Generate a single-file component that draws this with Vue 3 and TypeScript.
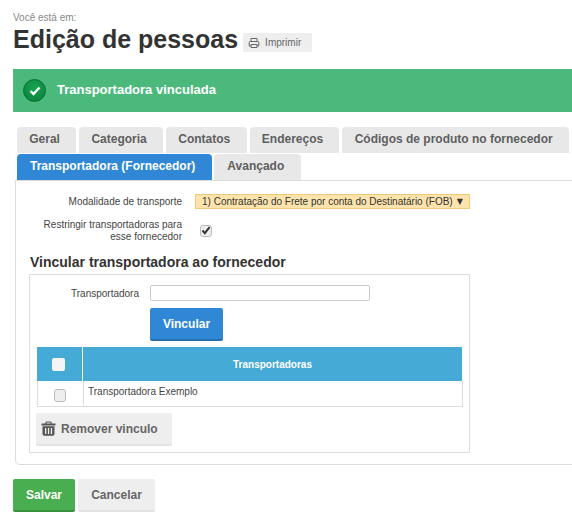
<script setup lang="ts">
import { ref } from 'vue'

const topTabs = ['Geral', 'Categoria', 'Contatos', 'Endereços', 'Códigos de produto no fornecedor', '']
const restrict = ref(true)
const allChecked = ref(false)
const rowChecked = ref(false)
const carrier = ref('')
</script>

<template>
  <div class="page">
    <p class="crumb">Você está em:</p>
    <div class="title-row">
      <h1>Edição de pessoas</h1>
      <button class="print" type="button">
        <svg width="12" height="12" viewBox="0 0 12 12" fill="none" stroke="#666" stroke-width="1">
          <path d="M3 4.5V1.5h6v3M3 9H1.2V5.5a1 1 0 0 1 1-1h7.6a1 1 0 0 1 1 1V9H9M3 7.5h6v3H3z" />
        </svg>
        Imprimir
      </button>
    </div>

    <div class="alert">
      <span class="alert-icon">
        <svg width="12" height="10" viewBox="0 0 12 10" fill="none" stroke="#fff" stroke-width="2.4">
          <path d="M1.5 5l3 3 6-6.5" />
        </svg>
      </span>
      <span class="alert-text">Transportadora vinculada</span>
    </div>

    <div class="tabs">
      <span v-for="t in topTabs" :key="t" class="tab">{{ t }}</span>
    </div>
    <div class="tabs second">
      <span class="tab active">Transportadora (Fornecedor)</span>
      <span class="tab">Avançado</span>
    </div>

    <section class="panel">
      <div class="field">
        <label>Modalidade de transporte</label>
        <div class="fake-select">
          <span>1) Contratação do Frete por conta do Destinatário (FOB)</span>
          <span class="arrow">▼</span>
        </div>
      </div>
      <div class="field check-field">
        <label>Restringir transportadoras para esse fornecedor</label>
        <span class="check-wrap">
          <input v-model="restrict" class="check" type="checkbox" />
          <svg v-if="restrict" class="tick" width="10" height="9" viewBox="0 0 10 9" fill="none" stroke="#333" stroke-width="2">
            <path d="M1.5 4.5l2.3 2.6L8.6 1.2" />
          </svg>
        </span>
      </div>

      <h2>Vincular transportadora ao fornecedor</h2>
      <div class="box">
        <div class="carrier-row">
          <label>Transportadora</label>
          <input v-model="carrier" type="text" />
        </div>
        <button class="btn primary" type="button">Vincular</button>

        <div class="grid-head">
          <span class="cell-check"><input v-model="allChecked" class="head-check" type="checkbox" /></span>
          <span class="cell-name">Transportadoras</span>
        </div>
        <div class="grid-row">
          <span class="cell-check"><input v-model="rowChecked" class="row-check" type="checkbox" /></span>
          <span class="cell-name">Transportadora Exemplo</span>
        </div>

        <button class="btn remove" type="button">
          <svg width="15" height="15" viewBox="0 0 15 15" fill="#555">
            <path d="M5 0.5h5l1 2h3.5v2H.5v-2H4zM5.7 1.5l-.4 1h4.4l-.4-1z" />
            <path fill-rule="evenodd" d="M1.5 5.3h12V13a1.8 1.8 0 0 1-1.8 1.8H3.3A1.8 1.8 0 0 1 1.5 13zM4 7v6h1.3V7zm2.9 0v6h1.3V7zm2.9 0v6h1.3V7z" />
          </svg>
          Remover vinculo
        </button>
      </div>
    </section>

    <div class="actions">
      <button class="btn save" type="button">Salvar</button>
      <button class="btn cancel" type="button">Cancelar</button>
    </div>
  </div>
</template>

<style>
html,
body {
  margin: 0;
  background: #fff;
  overflow: hidden;
}
</style>

<style scoped>
.page {
  width: 572px;
  height: 528px;
  overflow: hidden;
  box-sizing: border-box;
  padding: 12px 0 0 13px;
  font-family: 'Liberation Sans', Arial, sans-serif;
  color: #333;
}
.crumb {
  margin: 0;
  font-size: 10px;
  line-height: 12px;
  color: #888;
}
.title-row {
  display: flex;
  align-items: flex-start;
  gap: 5px;
  height: 31px;
}
h1 {
  margin: 0;
  font-size: 25px;
  line-height: 30px;
  font-weight: 700;
  white-space: nowrap;
}
.print {
  display: flex;
  align-items: center;
  gap: 5px;
  width: 69px;
  height: 19px;
  margin-top: 9px;
  padding: 0 0 0 5px;
  border: 0;
  background: #eee;
  font: 10px 'Liberation Sans', Arial, sans-serif;
  color: #666;
}
.alert {
  display: flex;
  align-items: center;
  gap: 11px;
  width: 570px;
  height: 43px;
  margin-top: 14px;
  padding-left: 10px;
  box-sizing: border-box;
  background: #4cb97c;
  color: #fff;
  font-size: 13px;
  font-weight: 700;
}
.alert-text {
  margin-top: -2px;
}
.alert-icon {
  display: flex;
  align-items: center;
  justify-content: center;
  width: 23px;
  height: 23px;
  border-radius: 50%;
  background: radial-gradient(circle at 50% 35%, #14a650, #0a7c3a);
  border: 1px solid #0b6e35;
  box-sizing: border-box;
}
.tabs {
  display: flex;
  gap: 3px;
  width: 600px;
  margin: 15px 0 0 4px;
  height: 26px;
}
.tabs.second {
  gap: 2px;
  margin-top: 1px;
}
.tab {
  display: flex;
  align-items: center;
  justify-content: center;
  box-sizing: border-box;
  height: 26px;
  padding: 0 16.25px 2px 12.25px;
  border-radius: 4px 4px 0 0;
  background: #e8e8e8;
  color: #5f5f5f;
  font-size: 12px;
  font-weight: 700;
  white-space: nowrap;
}
.second .tab {
  padding: 0 17px 2px 13px;
}
.tab:last-child:empty {
  width: 30px;
}
.tab.active {
  background: #2f87d6;
  color: #fff;
}
.panel {
  width: 590px;
  height: 285px;
  box-sizing: border-box;
  margin-left: 2px;
  padding: 13px 0 0 13px;
  border: 1px solid #ddd;
  border-radius: 0 0 0 5px;
}
.field {
  display: flex;
  align-items: center;
  gap: 13px;
  font-size: 10px;
  color: #444;
}
.field label {
  width: 153px;
  text-align: right;
  line-height: 12px;
}
.fake-select {
  display: flex;
  justify-content: space-between;
  align-items: center;
  box-sizing: border-box;
  width: 275px;
  height: 15px;
  padding: 0 6px 0 6px;
  background: #fde4ac;
  border: 1px solid #f0c878;
  color: #333;
  white-space: nowrap;
}
.arrow {
  font-size: 8px;
  font-family: 'DejaVu Sans', sans-serif;
}
.check-field {
  margin-top: 10px;
}
.check-wrap {
  position: relative;
  display: block;
  width: 12px;
  height: 12px;
  margin-left: 5px;
}
.check {
  appearance: none;
  display: block;
  box-sizing: border-box;
  width: 12px;
  height: 12px;
  margin: 0;
  border: 1px solid #bbb;
  border-radius: 3px;
  background: #eee;
}
.tick {
  position: absolute;
  left: 1px;
  top: 1px;
  pointer-events: none;
}
h2 {
  margin: 10px 0 0 1px;
  font-size: 14px;
  line-height: 18px;
  font-weight: 700;
  color: #333;
}
.box {
  box-sizing: border-box;
  width: 441px;
  height: 179px;
  margin-top: 3px;
  padding: 10px 6px 0 7px;
  border: 1px solid #ddd;
}
.carrier-row {
  display: flex;
  align-items: center;
  gap: 11px;
  font-size: 10px;
  color: #444;
}
.carrier-row label {
  width: 102px;
  text-align: right;
}
.carrier-row input {
  box-sizing: border-box;
  width: 220px;
  height: 16px;
  padding: 0 4px;
  border: 1px solid #ccc;
  border-radius: 2px;
}
.btn {
  display: block;
  box-sizing: border-box;
  height: 33px;
  border: 0;
  border-radius: 2px;
  font: 700 12px 'Liberation Sans', Arial, sans-serif;
}
.primary {
  width: 73px;
  margin: 7px 0 6px 113px;
  background: #2f87d6;
  border-bottom: 2px solid #2a6fae;
  color: #fff;
}
.grid-head,
.grid-row {
  display: grid;
  grid-template-columns: 46px 1fr;
  width: 426px;
  box-sizing: border-box;
}
.grid-head {
  width: 425px;
  height: 34px;
  background: #46aad7;
  color: #fff;
  font-size: 10px;
  font-weight: 700;
}
.grid-head .cell-check {
  border-right: 1px solid #fff;
}
.grid-head .cell-name {
  display: flex;
  align-items: center;
  justify-content: center;
}
.cell-check {
  display: flex;
  align-items: center;
  justify-content: center;
}
.head-check {
  appearance: none;
  width: 13px;
  height: 13px;
  margin: 0 3px 0 0;
  border-radius: 2px;
  background: #f5f5f5;
}
.grid-row {
  height: 26px;
  border: 1px solid #ddd;
  border-top: 0;
  font-size: 10px;
  color: #444;
}
.grid-row .cell-check {
  border-right: 1px solid #ddd;
}
.grid-row .cell-name {
  padding: 5px 0 0 4px;
}
.row-check {
  appearance: none;
  width: 12px;
  height: 13px;
  margin: 3px 2px 0 0;
  border: 1px solid #bbb;
  border-radius: 3px;
  background: #eee;
}
.remove {
  display: flex;
  align-items: center;
  gap: 5px;
  width: 136px;
  margin: 6px 0 0 -1px;
  padding-left: 5px;
  background: #eee;
  border-bottom: 2px solid #e2e2e2;
  color: #666;
}
.actions {
  display: flex;
  gap: 3px;
  margin-top: 14px;
}
.save {
  width: 62px;
  background: #49ae4f;
  border-bottom: 2px solid #3a8e3f;
  color: #fff;
}
.cancel {
  width: 77px;
  background: #eee;
  border-bottom: 2px solid #e2e2e2;
  color: #666;
}
</style>
